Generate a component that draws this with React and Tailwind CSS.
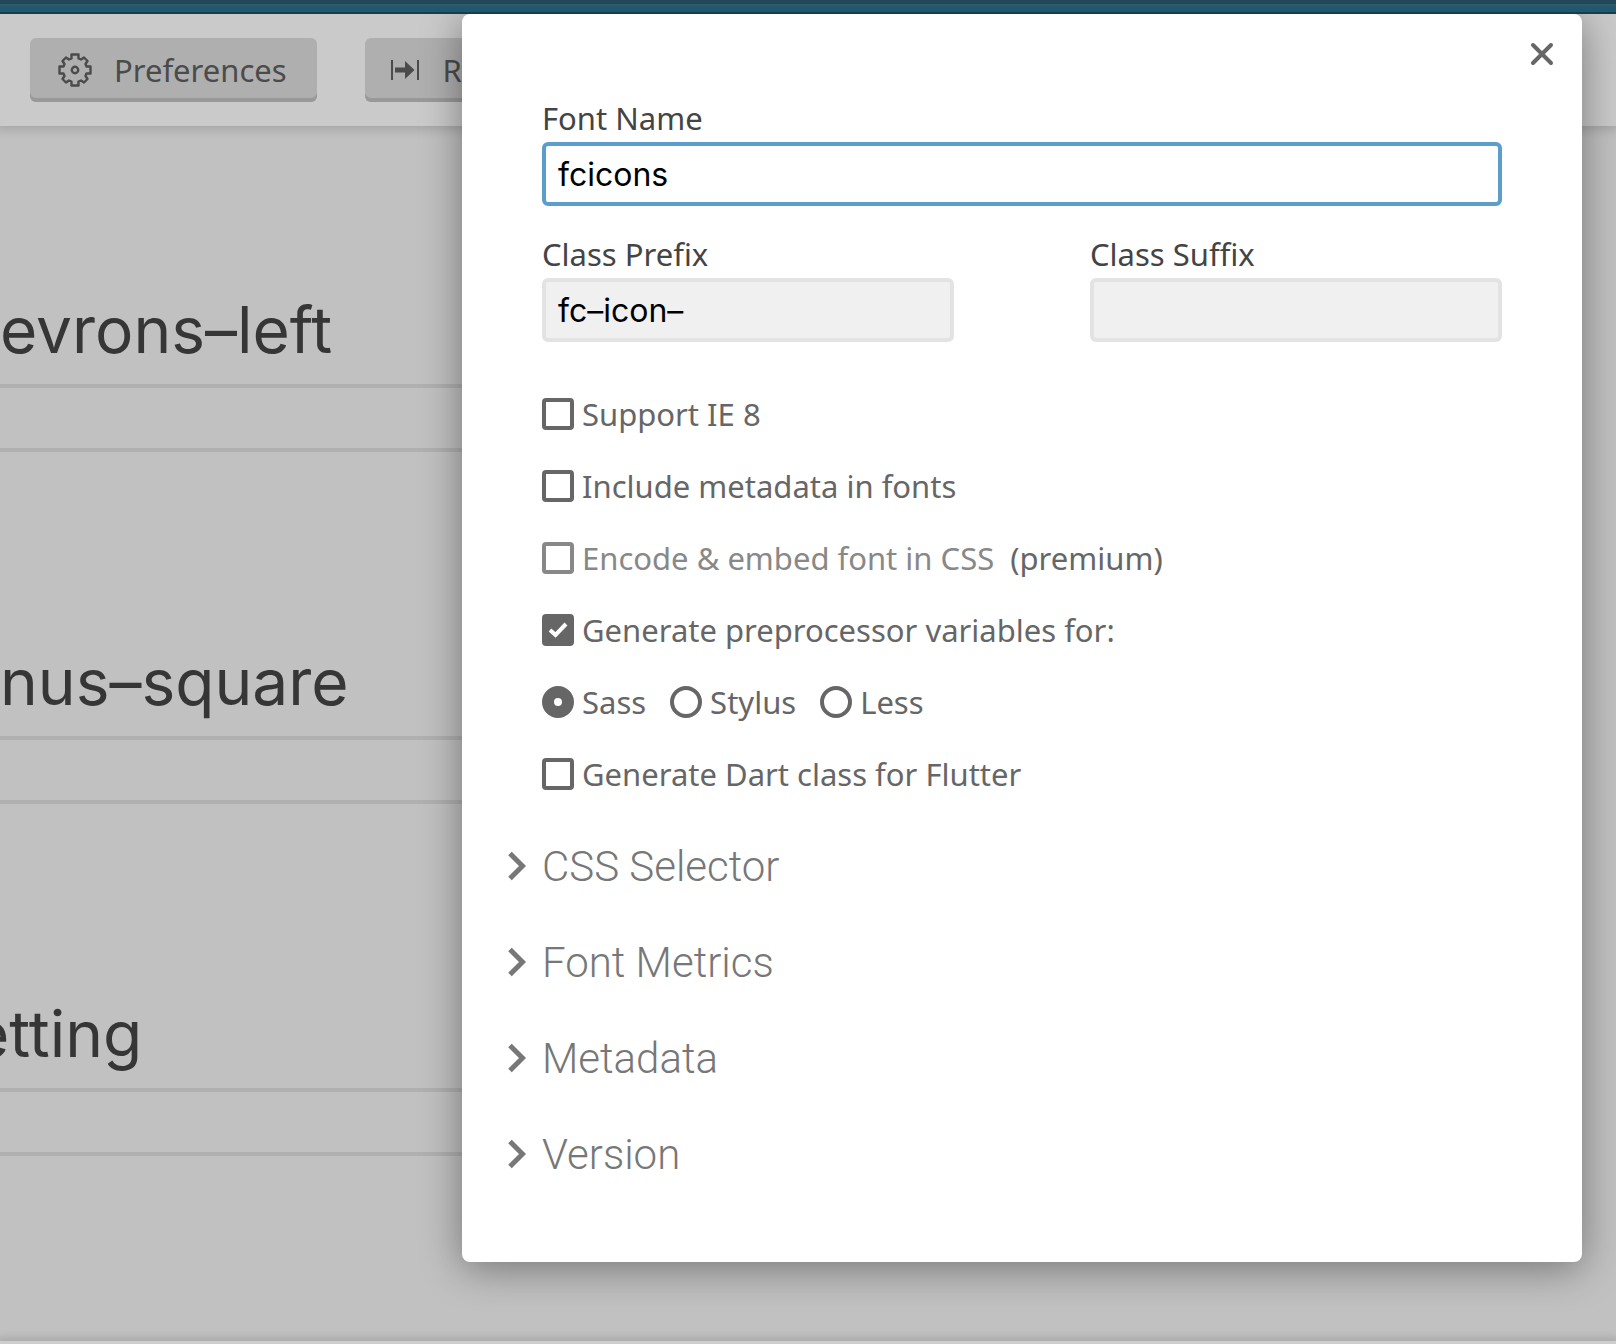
import { useState } from 'react';

const sections = ['CSS Selector', 'Font Metrics', 'Metadata', 'Version'];

const glyphs = [
  { name: 'evrons–left', offset: '' },
  { name: 'nus–square', offset: '' },
  { name: 'etting', offset: '-ml-7' },
];

function GearIcon() {
  return (
    <svg width="38" height="34" viewBox="-2 0 38 34" fill="none" stroke="currentColor" strokeWidth="2.4" strokeLinejoin="round">
      <path d="M13.5 1.5h7v4l2.5 1 3-2 3.5 3.5-2 3 1 2.5h4v7h-4l-1 2.5 2 3-3.5 3.5-3-2-2.5 1v4h-7v-4l-2.5-1-3 2-3.5-3.5 2-3-1-2.5h-4v-7h4l1-2.5-2-3 3.5-3.5 3 2 2.5-1z" />
      <circle cx="17" cy="17" r="3.2" />
    </svg>
  );
}

function ResetIcon() {
  return (
    <svg width="32" height="20" viewBox="0 0 32 20" fill="currentColor">
      <path d="M0 0h2v20H0zM26 0h2v20h-2zM4 7.500h10V1l9.500 9-9.500 9v-6.500H4z" />
    </svg>
  );
}

function ToolbarButton({ icon, children }) {
  return (
    <button className="flex h-16 items-center gap-5 rounded-md bg-[#afafaf] pr-[30px] pl-[26px] text-[31px] leading-10 text-[#4b4b4b] shadow-[inset_0_-4px_0_#999999]">
      {icon}
      {children}
    </button>
  );
}

function TextField({ id, label, value, onChange, active }) {
  return (
    <div className="flex flex-1 flex-col">
      <label htmlFor={id} className="text-[31px] leading-12 text-[#444444]">{label}</label>
      <input
        id={id}
        type="text"
        value={value}
        onChange={(e) => onChange(e.target.value)}
        className={`h-16 w-full rounded-md border-4 px-3 font-[Inter,sans-serif] text-[32px] text-black outline-none ${
          active ? 'border-[#5b9dcb] bg-white' : 'border-[#e3e3e3] bg-[#f0f0f0]'
        }`}
      />
    </div>
  );
}

function CheckOption({ label, checked = false, disabled = false, note }) {
  const [on, setOn] = useState(checked);
  return (
    <div className="flex h-18 items-center gap-4">
      <label className={`flex items-center gap-2 ${disabled ? 'text-[#888888]' : ''}`}>
        <span className="grid size-8 place-items-center">
          <input
            type="checkbox"
            checked={on}
            disabled={disabled}
            onChange={() => setOn((v) => !v)}
            className="col-start-1 row-start-1 size-8 appearance-none rounded-sm border-4 border-current checked:bg-current"
          />
          {on && (
            <svg className="pointer-events-none col-start-1 row-start-1" width="20" height="16" viewBox="0 0 20 16" fill="none" stroke="white" strokeWidth="4">
              <path d="M2 8l5.5 5L18 2" />
            </svg>
          )}
        </span>
        {label}
      </label>
      {note && <span>{note}</span>}
    </div>
  );
}

function RadioOption({ label, checked, onChange }) {
  return (
    <label className="flex items-center gap-2">
      <input
        type="radio"
        name="preprocessor"
        checked={checked}
        onChange={onChange}
        className="size-8 appearance-none rounded-full border-4 border-current checked:border-12"
      />
      {label}
    </label>
  );
}

function PreferencesDialog() {
  const [fontName, setFontName] = useState('fcicons');
  const [prefix, setPrefix] = useState('fc–icon–');
  const [suffix, setSuffix] = useState('');
  const [language, setLanguage] = useState('Sass');

  return (
    <div role="dialog" aria-label="Preferences" className="absolute top-0 right-[34px] left-[462px] rounded-lg bg-white px-20 pt-20 pb-15 shadow-[0_6px_40px_rgba(0,0,0,0.4)]">
      <button aria-label="Close" className="absolute top-7 right-7 text-[#666666]">
        <svg width="24" height="24" viewBox="0 0 24 24" fill="none" stroke="currentColor" strokeWidth="4" strokeLinecap="round">
          <path d="M3 3l18 18M21 3L3 21" />
        </svg>
      </button>

      <TextField id="font-name" label="Font Name" value={fontName} onChange={setFontName} active />
      <div className="mt-6 flex gap-[136px]">
        <TextField id="class-prefix" label="Class Prefix" value={prefix} onChange={setPrefix} />
        <TextField id="class-suffix" label="Class Suffix" value={suffix} onChange={setSuffix} />
      </div>

      <div className="mt-9 text-[31px] leading-10 text-[#666666]">
        <CheckOption label="Support IE 8" />
        <CheckOption label="Include metadata in fonts" />
        <CheckOption label="Encode & embed font in CSS" disabled note="(premium)" />
        <CheckOption label="Generate preprocessor variables for:" checked />
        <div className="flex h-18 items-center gap-6">
          {['Sass', 'Stylus', 'Less'].map((name) => (
            <RadioOption key={name} label={name} checked={language === name} onChange={() => setLanguage(name)} />
          ))}
        </div>
        <CheckOption label="Generate Dart class for Flutter" />
      </div>

      <div className="mt-2 -ml-9">
        {sections.map((title) => (
          <button key={title} className="flex h-24 w-full items-center gap-4 font-[Roboto,sans-serif] text-[42px] font-light text-[#777777]">
            <svg width="20" height="30" viewBox="0 0 20 30" fill="none" stroke="currentColor" strokeWidth="5">
              <path d="M4 2.500l12.500 12.500L4 27.500" />
            </svg>
            {title}
          </button>
        ))}
      </div>
    </div>
  );
}

export default function App() {
  return (
    <div className="flex min-h-screen flex-col bg-[#c1c1c1] font-['Noto_Sans',sans-serif]">
      <div className="h-[14px] border-t-4 border-b-2 border-t-[#22475a] border-b-[#1b3b4c] bg-[#205872]">
        <div className="h-[2px] bg-[#2f5b62]" />
      </div>
      <main className="relative flex flex-1 flex-col overflow-hidden">
        <header className="flex h-28 items-start gap-12 bg-[#cacaca] px-[30px] pt-6 shadow-[0_0_10px_4px_rgba(0,0,0,0.14)]">
          <ToolbarButton icon={<GearIcon />}>Preferences</ToolbarButton>
          <ToolbarButton icon={<ResetIcon />}>Reset</ToolbarButton>
        </header>
        <div className="flex w-1/2 flex-col gap-[190px] pt-41">
          {glyphs.map(({ name, offset }) => (
            <div key={name}>
              <div className={`pb-[14px] font-[Inter,sans-serif] text-[64px] leading-20 text-[#363636] ${offset}`}>{name}</div>
              <div className="h-[68px] border-y-4 border-[#b0b0b0]" />
            </div>
          ))}
        </div>
        <PreferencesDialog />
      </main>
      <footer className="h-[3px] bg-[#cecece] shadow-[0_0_8px_3px_rgba(0,0,0,0.14)]" />
    </div>
  );
}
